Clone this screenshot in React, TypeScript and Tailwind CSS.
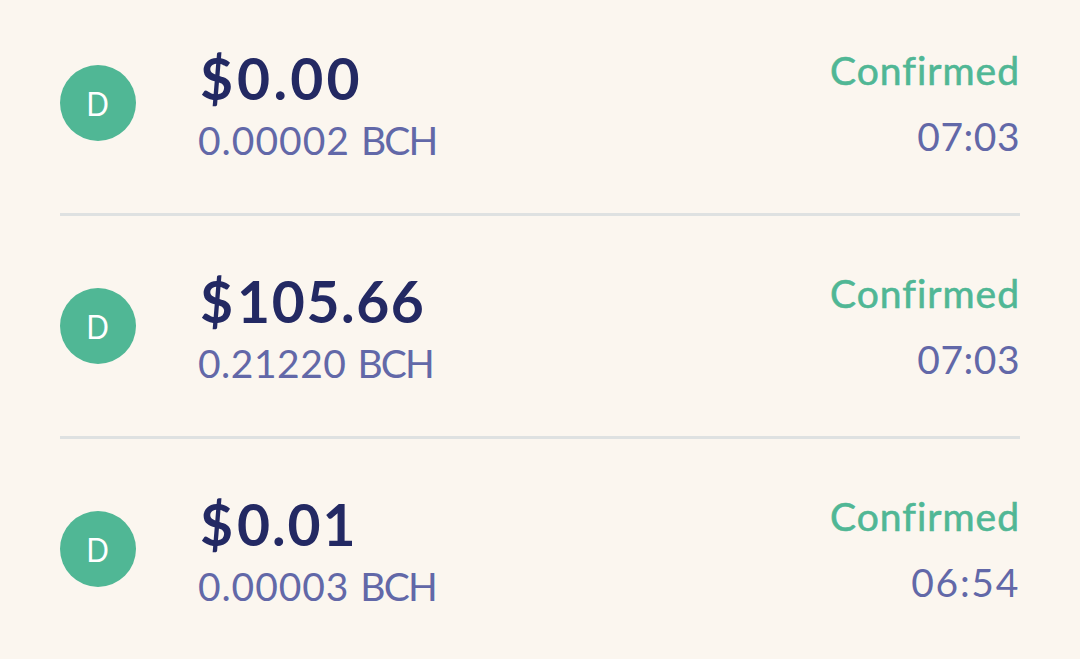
import clsx from "clsx";

interface Transaction {
  initial: string;
  fiat: string;
  fiatTracking: string;
  amount: string;
  amountTracking: string;
  status: string;
  time: string;
  timeTracking: string;
}

const transactions: Transaction[] = [
  {
    initial: "D",
    fiat: "0.00",
    fiatTracking: "tracking-[3.3px]",
    amount: "0.00002",
    amountTracking: "tracking-[1px]",
    status: "Confirmed",
    time: "07:03",
    timeTracking: "tracking-[0.5px]",
  },
  {
    initial: "D",
    fiat: "105.66",
    fiatTracking: "tracking-[1.6px]",
    amount: "0.21220",
    amountTracking: "tracking-[0.5px]",
    status: "Confirmed",
    time: "07:03",
    timeTracking: "tracking-[0.5px]",
  },
  {
    initial: "D",
    fiat: "0.01",
    fiatTracking: "tracking-[1.9px]",
    amount: "0.00003",
    amountTracking: "tracking-[0.9px]",
    status: "Confirmed",
    time: "06:54",
    timeTracking: "tracking-[1.7px]",
  },
];

function TransactionRow({ transaction }: { transaction: Transaction }) {
  return (
    <li className="flex h-[223px] items-start border-b-3 border-[#dee1e1] pt-[72px]">
      <div className="flex size-[76px] shrink-0 items-center justify-center rounded-full bg-[#50b795] pt-px text-[33px] leading-none text-white">
        <span className="scale-x-90">{transaction.initial}</span>
      </div>
      <div className="-mt-[20px] ml-[62px] flex flex-col whitespace-nowrap">
        <div className="flex h-[67px] items-center gap-[4px] pl-[2px] text-[57px] font-bold text-[#232963]">
          <span>$</span>
          <span className={transaction.fiatTracking}>{transaction.fiat}</span>
        </div>
        <div className="flex h-[56px] items-center gap-[11px] text-[39px] text-[#6268a8]">
          <span className={transaction.amountTracking}>
            {transaction.amount}
          </span>
          <span className="-tracking-[1.8px]">BCH</span>
        </div>
      </div>
      <div className="-mt-[27px] ml-auto flex flex-col items-end whitespace-nowrap text-[39px]">
        <div className="flex h-[64px] items-center tracking-[1px] text-[#50b795] [-webkit-text-stroke:0.6px_#50b795]">
          {transaction.status}
        </div>
        <div
          className={clsx(
            "flex h-[68px] items-center text-[#6268a8]",
            transaction.timeTracking
          )}
        >
          {transaction.time}
        </div>
      </div>
    </li>
  );
}

export default function App() {
  return (
    <main className="h-[659px] w-[1080px] overflow-hidden bg-[#fbf6ef] px-[60px] font-['Lato',sans-serif]">
      <ul className="-mt-[7px]">
        {transactions.map((transaction, index) => (
          <TransactionRow key={index} transaction={transaction} />
        ))}
      </ul>
    </main>
  );
}
